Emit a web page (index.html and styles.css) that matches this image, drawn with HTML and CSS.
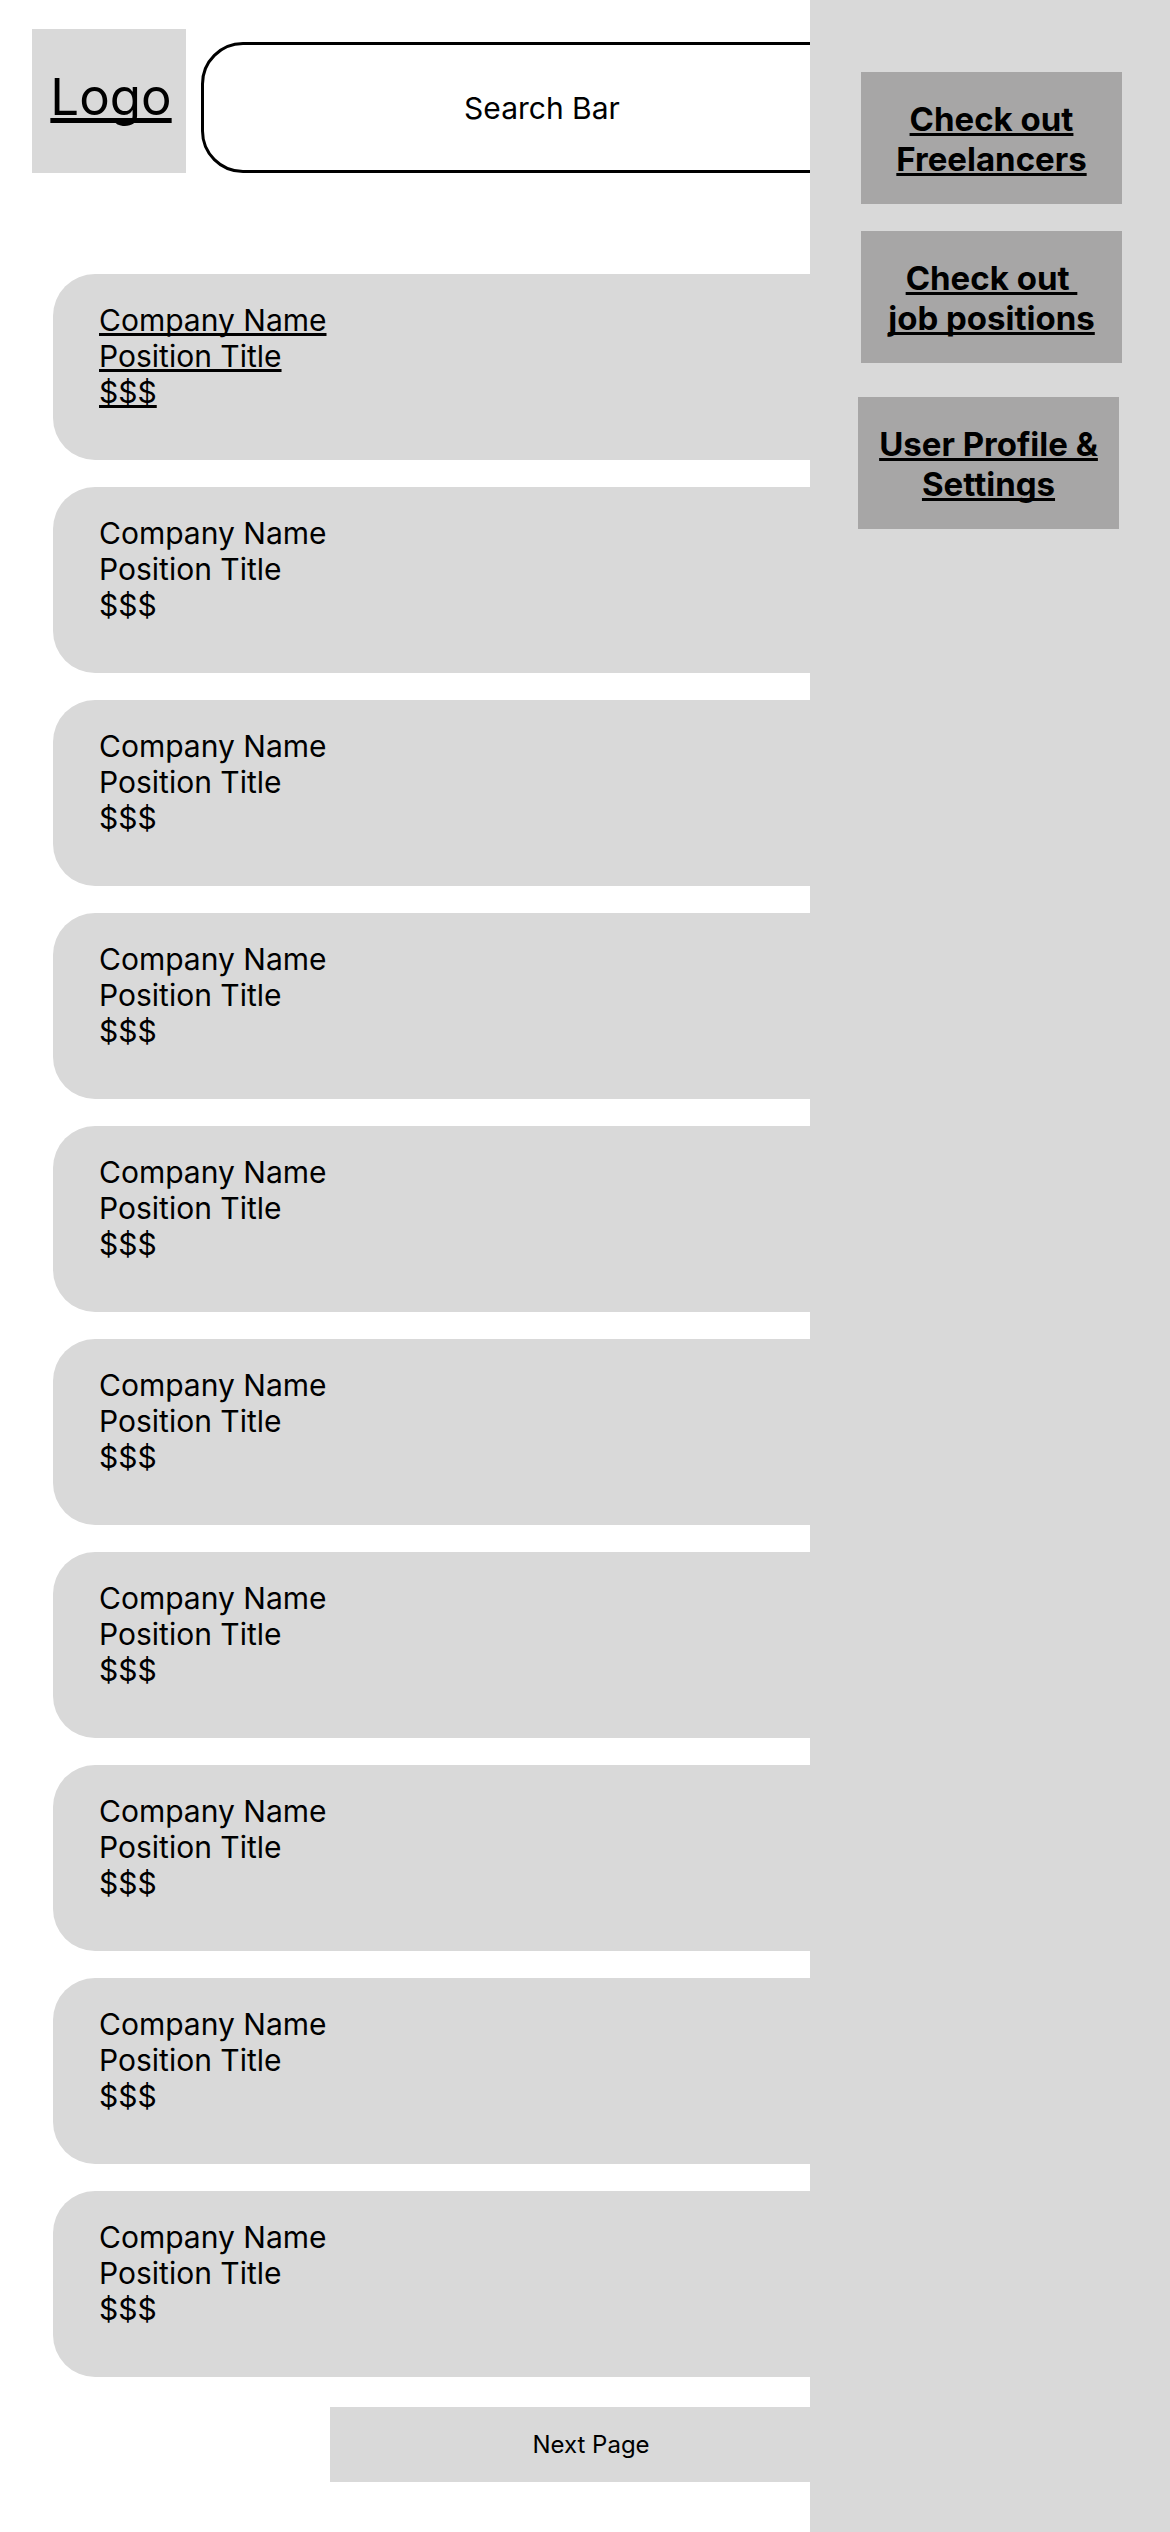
FILE: index.html
```html
<!DOCTYPE html>
<html lang="en">
<head>
<meta charset="utf-8">
<title>Job Board</title>
<link rel="stylesheet" href="styles.css">
</head>
<body>
<div class="page">
  <main class="main">
    <header class="header">
      <a class="logo" href="#">Logo</a>
      <div class="search">Search Bar</div>
    </header>
    <section class="cards">
      <article class="card card--linked">
        <a href="#">Company Name</a><br>
        <a href="#">Position Title</a><br>
        <a href="#">$$$</a>
      </article>
      <article class="card">Company Name<br>Position Title<br>$$$</article>
      <article class="card">Company Name<br>Position Title<br>$$$</article>
      <article class="card">Company Name<br>Position Title<br>$$$</article>
      <article class="card">Company Name<br>Position Title<br>$$$</article>
      <article class="card">Company Name<br>Position Title<br>$$$</article>
      <article class="card">Company Name<br>Position Title<br>$$$</article>
      <article class="card">Company Name<br>Position Title<br>$$$</article>
      <article class="card">Company Name<br>Position Title<br>$$$</article>
      <article class="card">Company Name<br>Position Title<br>$$$</article>
    </section>
    <div class="next">Next Page</div>
  </main>
  <aside class="sidebar">
    <a class="nav-btn" href="#">Check out<br>Freelancers</a>
    <a class="nav-btn" href="#">Check out&nbsp;<br>job positions</a>
    <a class="nav-btn nav-btn--shift" href="#">User Profile &amp;<br>Settings</a>
  </aside>
</div>
</body>
</html>
```
FILE: styles.css
```css
* { box-sizing: border-box; }

html, body {
  margin: 0;
  padding: 0;
  background: #ffffff;
}

body {
  width: 1170px;
  height: 2532px;
  overflow: hidden;
  font-family: Inter, "Noto Sans", "Liberation Sans", sans-serif;
  color: #000;
}

.page {
  position: relative;
  width: 1170px;
  height: 2532px;
}

a {
  color: #000;
  text-decoration: underline;
  text-decoration-skip-ink: none;
}

.main {
  display: flex;
  flex-direction: column;
  padding-top: 29px;
}

.header {
  display: flex;
  align-items: flex-end;
  gap: 15px;
  padding-left: 32px;
}

.logo {
  width: 154px;
  height: 144px;
  background: #d9d9d9;
  display: flex;
  align-items: center;
  justify-content: center;
  font-size: 51px;
  line-height: 60px;
  padding-bottom: 8px;
  padding-left: 4px;
}

.search {
  width: 682px;
  height: 131px;
  border: 3px solid #000;
  border-radius: 42px;
  display: flex;
  align-items: center;
  justify-content: center;
  font-size: 30px;
  line-height: 36px;
}

.cards {
  display: flex;
  flex-direction: column;
  gap: 27px;
  margin-top: 101px;
  padding-left: 53px;
}

.card {
  width: 1064px;
  height: 186px;
  background: #d9d9d9;
  border-radius: 42px;
  padding: 28px 0 0 46px;
  font-size: 30px;
  line-height: 36px;
}

.next {
  margin: 30px 0 0 330px;
  width: 522px;
  height: 75px;
  background: #d9d9d9;
  display: flex;
  align-items: center;
  justify-content: center;
  font-size: 24px;
  line-height: 29px;
}

.sidebar {
  position: absolute;
  top: 0;
  right: 0;
  width: 360px;
  height: 2532px;
  background: #d9d9d9;
  display: flex;
  flex-direction: column;
  gap: 27px;
  padding: 72px 0 0 51px;
}

.nav-btn {
  width: 261px;
  height: 132px;
  background: #a7a6a6;
  display: flex;
  align-items: center;
  justify-content: center;
  text-align: center;
  font-size: 33px;
  font-weight: 700;
  line-height: 40px;
  padding-top: 2px;
}

.nav-btn--shift {
  margin-top: 7px;
  margin-left: -3px;
}
```
